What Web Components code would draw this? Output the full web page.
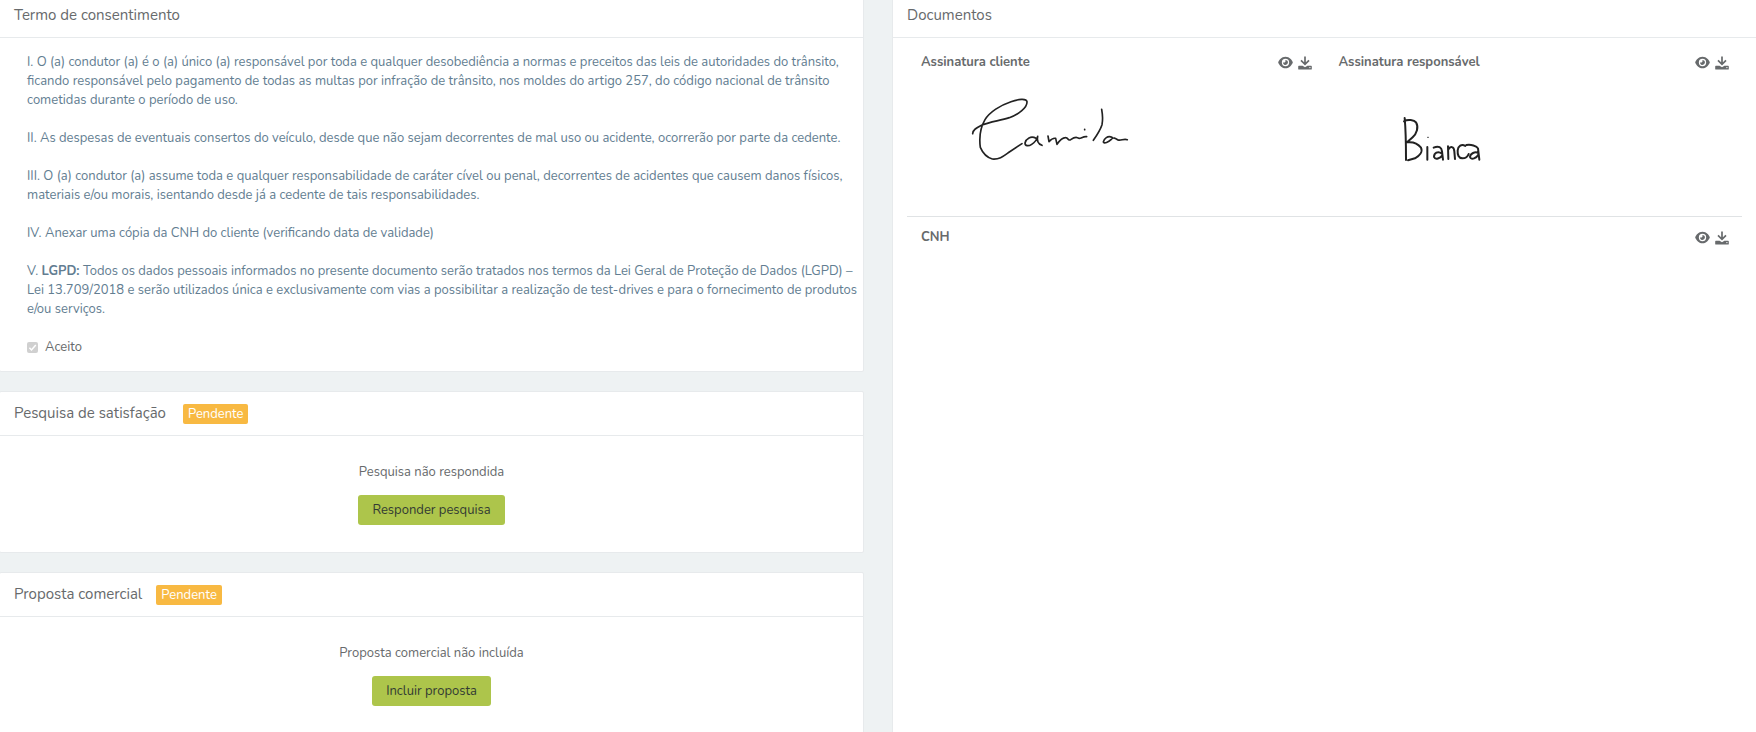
<!DOCTYPE html>
<html lang="pt-BR">
<head>
<meta charset="utf-8">
<title>Test-drive</title>
<style>
  body {
    margin: 0;
    background-color: #eef2f3;
    color: #676a6c;
    font: 13px/19px Nunito, Lato, sans-serif;
  }
</style>
</head>
<body>
<test-drive-page></test-drive-page>

<script>
function mount(element, html) {
  const template = document.createElement('template');
  template.innerHTML = html;

  const shadow = element.attachShadow({ mode: 'open' });
  shadow.append(template.content.cloneNode(true));
}

class PanelCard extends HTMLElement {
  connectedCallback() {
    mount(this, PanelCard.template);
  }
}

PanelCard.template = `
  <header>
    <h2><slot name="title"></slot></h2>
    <slot name="status"></slot>
  </header>
  <div class="content"><slot></slot></div>
  <style>
    :host {
      display: block;
      background-color: #fff;
      border: 1px solid #e7eaec;
      border-radius: 2px;
    }

    header {
      display: flex;
      align-items: center;
      gap: var(--title-gap, 14px);
      height: 43px;
      padding: 0 14px;
      border-bottom: 1px solid #e7eaec;
    }

    h2 {
      margin: 0;
      font-size: 15px;
      font-weight: 400;
    }
  </style>
`;

class StatusBadge extends HTMLElement {
  connectedCallback() {
    mount(this, StatusBadge.template);
  }
}

StatusBadge.template = `
  <slot></slot>
  <style>
    :host {
      display: block;
      padding: 0 5px;
      border-radius: 2px;
      background-color: #f8b942;
      color: #fff;
      line-height: 20px;
    }
  </style>
`;

class ConsentTerms extends HTMLElement {
  connectedCallback() {
    mount(this, ConsentTerms.template);
  }
}

ConsentTerms.template = `
  <p>I. O (a) condutor (a) é o (a) único (a) responsável por toda e qualquer desobediência a normas e preceitos das leis de autoridades do trânsito, ficando responsável pelo pagamento de todas as multas por infração de trânsito, nos moldes do artigo 257, do código nacional de trânsito cometidas durante o período de uso.</p>
  <p>II. As despesas de eventuais consertos do veículo, desde que não sejam decorrentes de mal uso ou acidente, ocorrerão por parte da cedente.</p>
  <p>III. O (a) condutor (a) assume toda e qualquer responsabilidade de caráter cível ou penal, decorrentes de acidentes que causem danos físicos, materiais e/ou morais, isentando desde já a cedente de tais responsabilidades.</p>
  <p>IV. Anexar uma cópia da CNH do cliente (verificando data de validade)</p>
  <p>V. <b>LGPD:</b> Todos os dados pessoais informados no presente documento serão tratados nos termos da Lei Geral de Proteção de Dados (LGPD) – Lei 13.709/2018 e serão utilizados única e exclusivamente com vias a possibilitar a realização de test-drives e para o fornecimento de produtos e/ou serviços.</p>
  <div class="accept">
    <input type="checkbox" id="accept" checked disabled>
    <label for="accept">Aceito</label>
  </div>
  <style>
    :host {
      display: block;
      padding: 15px 4px 14px 27px;
    }

    p {
      margin: 0 0 19px;
      color: #627d91;
    }

    .accept {
      display: flex;
      align-items: center;
      gap: 7px;
    }

    input {
      appearance: none;
      width: 11px;
      height: 11px;
      margin: 0;
      border-radius: 2px;
      background: #d0d0d0 url("data:image/svg+xml,%3Csvg xmlns='http://www.w3.org/2000/svg' viewBox='0 0 11 11'%3E%3Cpath d='M2.4 5.8 4.5 8 8.8 2.9' fill='none' stroke='white' stroke-width='1.5'/%3E%3C/svg%3E");
    }
  </style>
`;

class PendingStep extends HTMLElement {
  connectedCallback() {
    mount(this, PendingStep.template);
  }
}

PendingStep.template = `
  <p><slot></slot></p>
  <button type="button"><slot name="action"></slot></button>
  <style>
    :host {
      display: flex;
      flex-direction: column;
      align-items: center;
      gap: 13px;
      padding: 27px 14px;
    }

    p {
      margin: 0;
    }

    button {
      height: 30px;
      padding: 0 14px;
      border: 0;
      border-radius: 3px;
      background-color: #adc54b;
      color: #333b33;
      font: inherit;
      cursor: pointer;
    }
  </style>
`;

class DocumentItem extends HTMLElement {
  connectedCallback() {
    mount(this, DocumentItem.template);
  }
}

DocumentItem.template = `
  <header>
    <h3><slot name="name"></slot></h3>
    <a href="#ver" aria-label="Visualizar">
      <svg width="15" height="13" viewBox="0 0 576 512"><path d="M288 32c-80.800 0-145.500 36.800-192.600 80.600C48.600 156 17.300 208 2.500 243.700c-3.300 7.900-3.300 16.700 0 24.600C17.300 304 48.600 356 95.400 399.400C142.500 443.200 207.200 480 288 480s145.500-36.800 192.600-80.600c46.800-43.500 78.100-95.400 93-131.100c3.300-7.900 3.300-16.700 0-24.600c-14.900-35.700-46.200-87.700-93-131.100C433.500 68.800 368.800 32 288 32zM144 256a144 144 0 1 1 288 0 144 144 0 1 1-288 0zm144-64c0 35.300-28.700 64-64 64c-7.100 0-13.900-1.200-20.300-3.300c-5.500-1.800-11.900 1.600-11.700 7.400c.3 6.900 1.300 13.800 3.200 20.700c13.700 51.200 66.400 81.600 117.600 67.900s81.600-66.400 67.900-117.600c-11.100-41.500-47.800-69.400-88.600-71.100c-5.800-.2-9.200 6.100-7.400 11.700c2.100 6.400 3.300 13.200 3.300 20.300z"/></svg>
    </a>
    <a href="#baixar" aria-label="Baixar">
      <svg width="14" height="14" viewBox="0 0 14 14"><path d="M7 .5V8M3 4.400l4 3.900 4-3.900" fill="none" stroke="currentColor" stroke-width="1.700"/><path d="M.9 9.700h3.700L7 11.300l2.400-1.600h3.700q.7 0 .7.700v2.500q0 .7-.7.700H.9q-.7 0-.7-.7v-2.500q0-.7.7-.7z"/><circle cx="11.900" cy="11.600" r=".7" fill="#fff"/></svg>
    </a>
  </header>
  <slot></slot>
  <style>
    :host {
      display: block;
      padding: 15px 13px 0 14px;
    }

    header {
      display: flex;
      align-items: center;
      gap: 5px;
    }

    h3 {
      flex: 1;
      margin: 0;
      font-size: 13px;
      font-weight: 700;
    }

    a {
      display: flex;
      color: inherit;
    }

    svg {
      fill: currentColor;
    }
  </style>
`;

class SignatureDrawing extends HTMLElement {
  connectedCallback() {
    mount(this, SignatureDrawing.template);
    const name = this.getAttribute('data-name');
    this.shadowRoot.querySelector('svg').innerHTML = SignatureDrawing.strokes[name];
  }
}

// pen strokes, three units to a pixel
SignatureDrawing.strokes = {
  camila: `
    <g transform="translate(117 15)">
      <path d="M38 146C38 133 52 127 66 120C92 110 120 107 148 98C176 88 202 68 201 50C199 39 174 43 153 50C122 60 88 82 75 104C60 130 57 158 61 187C69 206 81 217 97 222C119 224 131 213 148 201L186 176"/>
      <path d="M228 160C213 151 198 161 195 174C195 184 206 184 215 178C226 171 231 162 233 154C230 167 233 176 246 181"/>
      <path d="M264 153L267 170C274 162 282 159 287 160L291 178C298 168 306 158 316 158C326 157 322 169 332 164C341 158 347 156 352 158C360 165 367 153 380 155"/>
      <path d="M374 133v1M425 73C428 90 429 104 426 119C421 135 411 150 400 166"/>
      <path d="M456 157C443 151 432 161 430 171C432 177 446 171 453 164C460 155 467 160 474 165C484 168 490 160 502 164"/>
    </g>`,
  bianca: `
    <g transform="translate(153 77)" stroke-width="6">
      <path d="M44 37C47 69 48 105 48 163M42 47C53 40 73 43 78 50C87 65 80 84 68 95L51 110C66 108 83 113 93 126C99 139 88 151 75 158L54 164"/>
      <path d="M112 124V162"/>
      <path d="M113 95h2" stroke-width="3"/>
      <path d="M131 126C146 119 155 125 156 137L159 162M156 144C143 134 132 143 132 154C136 164 151 158 157 149"/>
      <path d="M174 122L175 160M175 132C181 120 192 122 193 137L195 160"/>
      <path d="M226 121C215 113 204 121 203 134C202 148 206 158 217 158C227 158 234 151 236 145"/>
      <path d="M229 118C243 116 260 120 264 128L268 162M265 142C255 137 241 143 240 154C244 165 260 157 266 146"/>
    </g>`,
};

SignatureDrawing.template = `
  <svg viewBox="0 0 900 408" width="300" height="136" role="img" aria-label="Assinatura"></svg>
  <style>
    :host {
      display: block;
      padding-top: 8px;
    }

    svg {
      display: block;
      fill: none;
      stroke: #222;
      stroke-width: 5;
      stroke-linecap: round;
      stroke-linejoin: round;
    }
  </style>
`;

class TestDrivePage extends HTMLElement {
  connectedCallback() {
    mount(this, TestDrivePage.template);
  }
}

TestDrivePage.template = `
  <section>
    <panel-card>
      <span slot="title">Termo de consentimento</span>
      <consent-terms></consent-terms>
    </panel-card>
    <panel-card class="survey">
      <span slot="title">Pesquisa de satisfação</span>
      <status-badge slot="status">Pendente</status-badge>
      <pending-step>
        Pesquisa não respondida
        <span slot="action">Responder pesquisa</span>
      </pending-step>
    </panel-card>
    <panel-card>
      <span slot="title">Proposta comercial</span>
      <status-badge slot="status">Pendente</status-badge>
      <pending-step>
        Proposta comercial não incluída
        <span slot="action">Incluir proposta</span>
      </pending-step>
    </panel-card>
  </section>
  <panel-card class="side">
    <span slot="title">Documentos</span>
    <div class="documents">
      <document-item>
        <span slot="name">Assinatura cliente</span>
        <signature-drawing data-name="camila"></signature-drawing>
      </document-item>
      <document-item>
        <span slot="name">Assinatura responsável</span>
        <signature-drawing data-name="bianca"></signature-drawing>
      </document-item>
      <document-item class="wide">
        <span slot="name">CNH</span>
      </document-item>
    </div>
  </panel-card>
  <style>
    :host {
      display: grid;
      grid-template-columns: 1fr 1fr;
      gap: 28px;
      height: calc(100vh + 7px);
      margin-top: -7px;
      overflow: hidden;
    }

    section {
      display: flex;
      flex-direction: column;
      gap: 19px;
      margin-left: -1px;
    }

    section panel-card:last-child {
      flex: 1;
    }

    .side {
      margin: 0 -1px -2px 0;
    }

    .survey {
      --title-gap: 17px;
    }

    .documents {
      display: grid;
      grid-template-columns: 1fr 1fr;
      padding: 0 14px;
    }

    .wide {
      grid-column: 1 / -1;
      border-top: 1px solid #e0e3e5;
      padding-top: 11px;
    }
  </style>
`;

customElements.define('panel-card', PanelCard);
customElements.define('status-badge', StatusBadge);
customElements.define('consent-terms', ConsentTerms);
customElements.define('pending-step', PendingStep);
customElements.define('document-item', DocumentItem);
customElements.define('signature-drawing', SignatureDrawing);
customElements.define('test-drive-page', TestDrivePage);
</script>
</body>
</html>
